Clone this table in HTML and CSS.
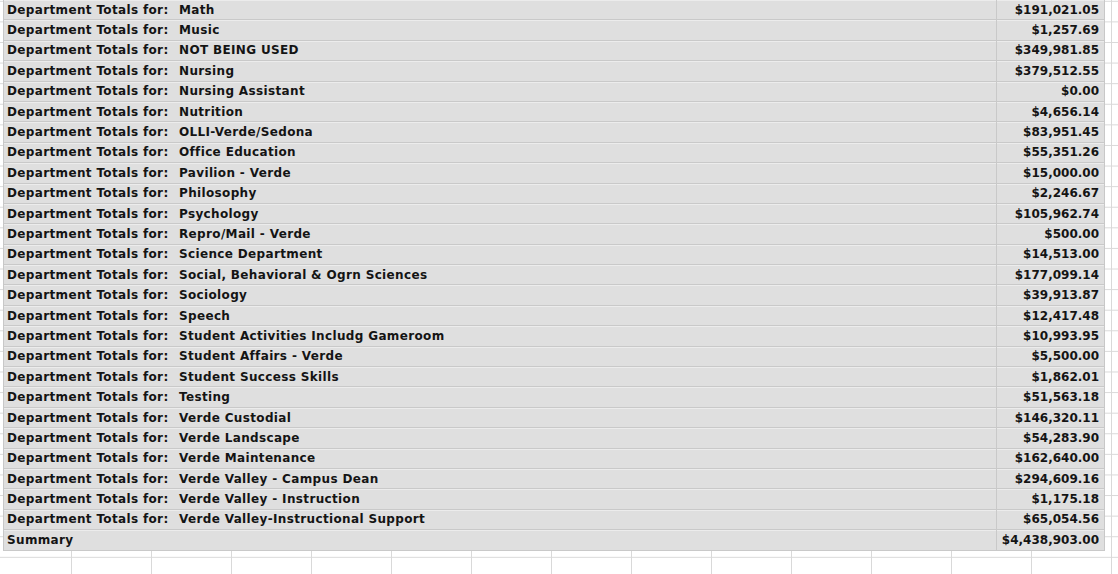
FILE: index.html
```html
<!DOCTYPE html>
<html lang="en">
<head>
  <meta charset="UTF-8">
  <title>Department Totals</title>
  <link rel="stylesheet" href="styles.css">
</head>
<body>
  <div class="sheet">
    <div class="totals">
      <div class="row"><div class="name"><span class="label">Department Totals for:</span>Math</div><div class="amount">$191,021.05</div></div>
      <div class="row"><div class="name"><span class="label">Department Totals for:</span>Music</div><div class="amount">$1,257.69</div></div>
      <div class="row"><div class="name"><span class="label">Department Totals for:</span>NOT BEING USED</div><div class="amount">$349,981.85</div></div>
      <div class="row"><div class="name"><span class="label">Department Totals for:</span>Nursing</div><div class="amount">$379,512.55</div></div>
      <div class="row"><div class="name"><span class="label">Department Totals for:</span>Nursing Assistant</div><div class="amount">$0.00</div></div>
      <div class="row"><div class="name"><span class="label">Department Totals for:</span>Nutrition</div><div class="amount">$4,656.14</div></div>
      <div class="row"><div class="name"><span class="label">Department Totals for:</span>OLLI-Verde/Sedona</div><div class="amount">$83,951.45</div></div>
      <div class="row"><div class="name"><span class="label">Department Totals for:</span>Office Education</div><div class="amount">$55,351.26</div></div>
      <div class="row"><div class="name"><span class="label">Department Totals for:</span>Pavilion - Verde</div><div class="amount">$15,000.00</div></div>
      <div class="row"><div class="name"><span class="label">Department Totals for:</span>Philosophy</div><div class="amount">$2,246.67</div></div>
      <div class="row"><div class="name"><span class="label">Department Totals for:</span>Psychology</div><div class="amount">$105,962.74</div></div>
      <div class="row"><div class="name"><span class="label">Department Totals for:</span>Repro/Mail - Verde</div><div class="amount">$500.00</div></div>
      <div class="row"><div class="name"><span class="label">Department Totals for:</span>Science Department</div><div class="amount">$14,513.00</div></div>
      <div class="row"><div class="name"><span class="label">Department Totals for:</span>Social, Behavioral &amp; Ogrn Sciences</div><div class="amount">$177,099.14</div></div>
      <div class="row"><div class="name"><span class="label">Department Totals for:</span>Sociology</div><div class="amount">$39,913.87</div></div>
      <div class="row"><div class="name"><span class="label">Department Totals for:</span>Speech</div><div class="amount">$12,417.48</div></div>
      <div class="row"><div class="name"><span class="label">Department Totals for:</span>Student Activities Includg Gameroom</div><div class="amount">$10,993.95</div></div>
      <div class="row"><div class="name"><span class="label">Department Totals for:</span>Student Affairs - Verde</div><div class="amount">$5,500.00</div></div>
      <div class="row"><div class="name"><span class="label">Department Totals for:</span>Student Success Skills</div><div class="amount">$1,862.01</div></div>
      <div class="row"><div class="name"><span class="label">Department Totals for:</span>Testing</div><div class="amount">$51,563.18</div></div>
      <div class="row"><div class="name"><span class="label">Department Totals for:</span>Verde Custodial</div><div class="amount">$146,320.11</div></div>
      <div class="row"><div class="name"><span class="label">Department Totals for:</span>Verde Landscape</div><div class="amount">$54,283.90</div></div>
      <div class="row"><div class="name"><span class="label">Department Totals for:</span>Verde Maintenance</div><div class="amount">$162,640.00</div></div>
      <div class="row"><div class="name"><span class="label">Department Totals for:</span>Verde Valley - Campus Dean</div><div class="amount">$294,609.16</div></div>
      <div class="row"><div class="name"><span class="label">Department Totals for:</span>Verde Valley - Instruction</div><div class="amount">$1,175.18</div></div>
      <div class="row"><div class="name"><span class="label">Department Totals for:</span>Verde Valley-Instructional Support</div><div class="amount">$65,054.56</div></div>
      <div class="row summary"><div class="name">Summary</div><div class="amount">$4,438,903.00</div></div>
    </div>
  </div>
</body>
</html>
```

FILE: styles.css
```css
html, body {
  margin: 0;
  height: 100%;
}

body {
  background-color: #fff;
  /* spreadsheet grid behind the report */
  background-image:
    linear-gradient(to right, #d9d9d9 1px, transparent 1px),
    linear-gradient(to bottom, #d9d9d9 1px, transparent 1px);
  background-size: 80px 20.6px;
  background-position: 71px 0.8px;
  overflow: hidden;
}

.sheet {
  padding-left: 3px;
}

.totals {
  width: 1102px;
  box-sizing: border-box;
  border-left: 1px solid #c8c8c8;
  border-right: 1px solid #c8c8c8;
  font-family: "DejaVu Sans", Verdana, sans-serif;
  font-size: 12px;
  font-weight: bold;
  color: #141414;
}

.row {
  display: flex;
  height: 20.4px;
  box-sizing: border-box;
  border-bottom: 1px solid #c9c9c9;
  background: #dfdfdf;
  box-shadow: inset 0 1px 0 #ececec;
}

.name {
  flex: 1;
  display: flex;
  align-items: center;
  padding-left: 3px;
  white-space: nowrap;
  letter-spacing: 0.35px;
}

.label {
  width: 172px;
  flex: none;
}

.amount {
  width: 108px;
  display: flex;
  align-items: center;
  justify-content: flex-end;
  padding-right: 5px;
  box-sizing: border-box;
  border-left: 1px solid #c9c9c9;
}
```
